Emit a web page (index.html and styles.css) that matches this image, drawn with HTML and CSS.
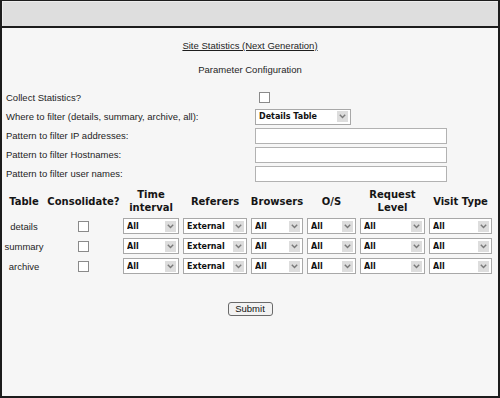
FILE: index.html
```html
<!DOCTYPE html>
<html lang="en">
<head>
    <meta charset="UTF-8">
    <meta name="viewport" content="width=device-width, initial-scale=1.0">
    <title>Site Statistics (Next Generation)</title>
    <link rel="stylesheet" href="styles.css">
</head>
<body>
    <div class="frame">
        <div class="topbar"></div>
        <form class="content" action="#" onsubmit="return false;">
            <h1 class="title"><a href="#">Site Statistics (Next Generation)</a></h1>
            <h2 class="subtitle">Parameter Configuration</h2>

            <div class="params">
                <label class="label" for="collect">Collect Statistics?</label>
                <div class="field"><input type="checkbox" class="check" id="collect"></div>

                <label class="label" for="where">Where to filter (details, summary, archive, all):</label>
                <div class="field">
                    <span class="sel sel-where">
                        <select id="where">
                            <option>Details Table</option>
                            <option>Summary Table</option>
                            <option>Archive Table</option>
                            <option>All</option>
                        </select>
                        <span class="arrow"><svg width="7" height="5" viewBox="0 0 7 5"><path d="M0.8 0.8 L3.5 3.6 L6.2 0.8" fill="none" stroke="#7a7a7a" stroke-width="1.4"/></svg></span>
                    </span>
                </div>

                <label class="label" for="ip">Pattern to filter IP addresses:</label>
                <div class="field"><input type="text" class="text" id="ip"></div>

                <label class="label" for="hosts">Pattern to filter Hostnames:</label>
                <div class="field"><input type="text" class="text" id="hosts"></div>

                <label class="label" for="users">Pattern to filter user names:</label>
                <div class="field"><input type="text" class="text" id="users"></div>
            </div>

            <table class="stats">
                <colgroup>
                    <col style="width:44px">
                    <col style="width:75px">
                    <col style="width:60px">
                    <col style="width:68px">
                    <col style="width:56px">
                    <col style="width:53px">
                    <col style="width:69px">
                    <col style="width:67px">
                </colgroup>
                <thead>
                    <tr>
                        <th>Table</th>
                        <th>Consolidate?</th>
                        <th>Time<br>interval</th>
                        <th>Referers</th>
                        <th>Browsers</th>
                        <th>O/S</th>
                        <th>Request<br>Level</th>
                        <th>Visit Type</th>
                    </tr>
                </thead>
                <tbody id="rows"></tbody>
            </table>

            <div class="actions">
                <button type="submit" class="submit">Submit</button>
            </div>
        </form>
    </div>

    <script>
        const tables = ["details", "summary", "archive"];
        const columns = [
            { name: "time", value: "All" },
            { name: "referers", value: "External" },
            { name: "browsers", value: "All" },
            { name: "os", value: "All" },
            { name: "level", value: "All" },
            { name: "visit", value: "All" }
        ];
        const arrow = '<span class="arrow"><svg width="7" height="5" viewBox="0 0 7 5"><path d="M0.8 0.8 L3.5 3.6 L6.2 0.8" fill="none" stroke="#7a7a7a" stroke-width="1.4"/></svg></span>';

        function buildRows() {
            const body = document.getElementById('rows');
            tables.forEach((table) => {
                const tr = document.createElement('tr');
                let html = `<td class="name">${table}</td>`;
                html += `<td class="center"><input type="checkbox" class="check" name="${table}_consolidate"></td>`;
                columns.forEach((col) => {
                    html += `<td><span class="sel"><select name="${table}_${col.name}"><option>${col.value}</option></select>${arrow}</span></td>`;
                });
                tr.innerHTML = html;
                body.appendChild(tr);
            });
        }

        buildRows();
    </script>
</body>
</html>
```

FILE: styles.css
```css
body {
    margin: 0;
    padding: 0;
    font-family: "Liberation Sans", Arial, sans-serif;
    font-size: 9.5px;
    color: #1e1e1e;
    background: #f5f5f5;
}
.frame {
    width: 500px;
    height: 398px;
    box-sizing: border-box;
    border: 2px solid #1c1c1c;
    border-top-width: 1px;
    background: #f6f6f6;
    overflow: hidden;
}
.topbar {
    height: 25px;
    background: #dedede;
    border-bottom: 2px solid #1c1c1c;
    box-shadow: inset 1px 1px 0 #ececec;
}
.content {
    margin: 0;
    padding-top: 12px;
}
.title {
    margin: 0;
    font-size: 9.5px;
    font-weight: normal;
    line-height: 12px;
    text-align: center;
}
.title a {
    color: #1e1e1e;
    text-decoration: underline;
}
.subtitle {
    margin: 12px 0 0;
    font-size: 9.5px;
    font-weight: normal;
    line-height: 12px;
    text-align: center;
}
.params {
    display: grid;
    grid-template-columns: 249px auto;
    grid-auto-rows: 19px;
    align-items: center;
    margin-top: 12px;
    padding-left: 4px;
}
.label {
    line-height: 12px;
}
.field {
    display: flex;
    align-items: center;
}
.check {
    appearance: none;
    -webkit-appearance: none;
    width: 11px;
    height: 11px;
    margin: 0 0 0 4px;
    border: 1px solid #8a8a8a;
    background: #fff;
    box-sizing: border-box;
    vertical-align: middle;
}
.text {
    width: 192px;
    height: 16px;
    box-sizing: border-box;
    margin: 0;
    padding: 0 3px;
    border: 1px solid #b2b2b2;
    background: #fff;
    font: 9.5px "Liberation Sans", Arial, sans-serif;
}
.sel {
    display: flex;
    align-items: center;
    height: 16px;
    margin: 0 2px;
    box-sizing: border-box;
    border: 1px solid #a8a8a8;
    background: #fff;
}
.sel select {
    flex: 1;
    min-width: 0;
    height: 14px;
    margin: 0;
    padding: 0 0 0 3px;
    border: 0;
    background: transparent;
    appearance: none;
    -webkit-appearance: none;
    font: bold 8px "DejaVu Sans", Verdana, sans-serif;
    color: #111;
    outline: none;
}
.arrow {
    display: flex;
    align-items: center;
    justify-content: center;
    width: 11px;
    height: 11px;
    margin-right: 2px;
    background: #dddddd;
}
.sel-where {
    width: 96px;
    margin: 0;
}
.stats {
    width: 492px;
    table-layout: fixed;
    border-collapse: collapse;
    margin-top: 3px;
}
.stats th {
    height: 30px;
    padding: 0;
    font: bold 10px/13px "DejaVu Sans", Verdana, sans-serif;
    color: #151515;
    text-align: center;
    vertical-align: middle;
    white-space: nowrap;
}
.stats td {
    height: 20px;
    padding: 0;
    vertical-align: middle;
}
.stats td.name,
.stats td.center {
    text-align: center;
}
.stats td.center .check {
    margin: 0;
}
.actions {
    margin-top: 26px;
    text-align: center;
}
.submit {
    width: 45px;
    height: 14px;
    padding: 0;
    border: 1px solid #6a6a6a;
    border-radius: 3px;
    background: #f2f2f2;
    font: 9.5px/12px "Liberation Sans", Arial, sans-serif;
    color: #111;
}
```
